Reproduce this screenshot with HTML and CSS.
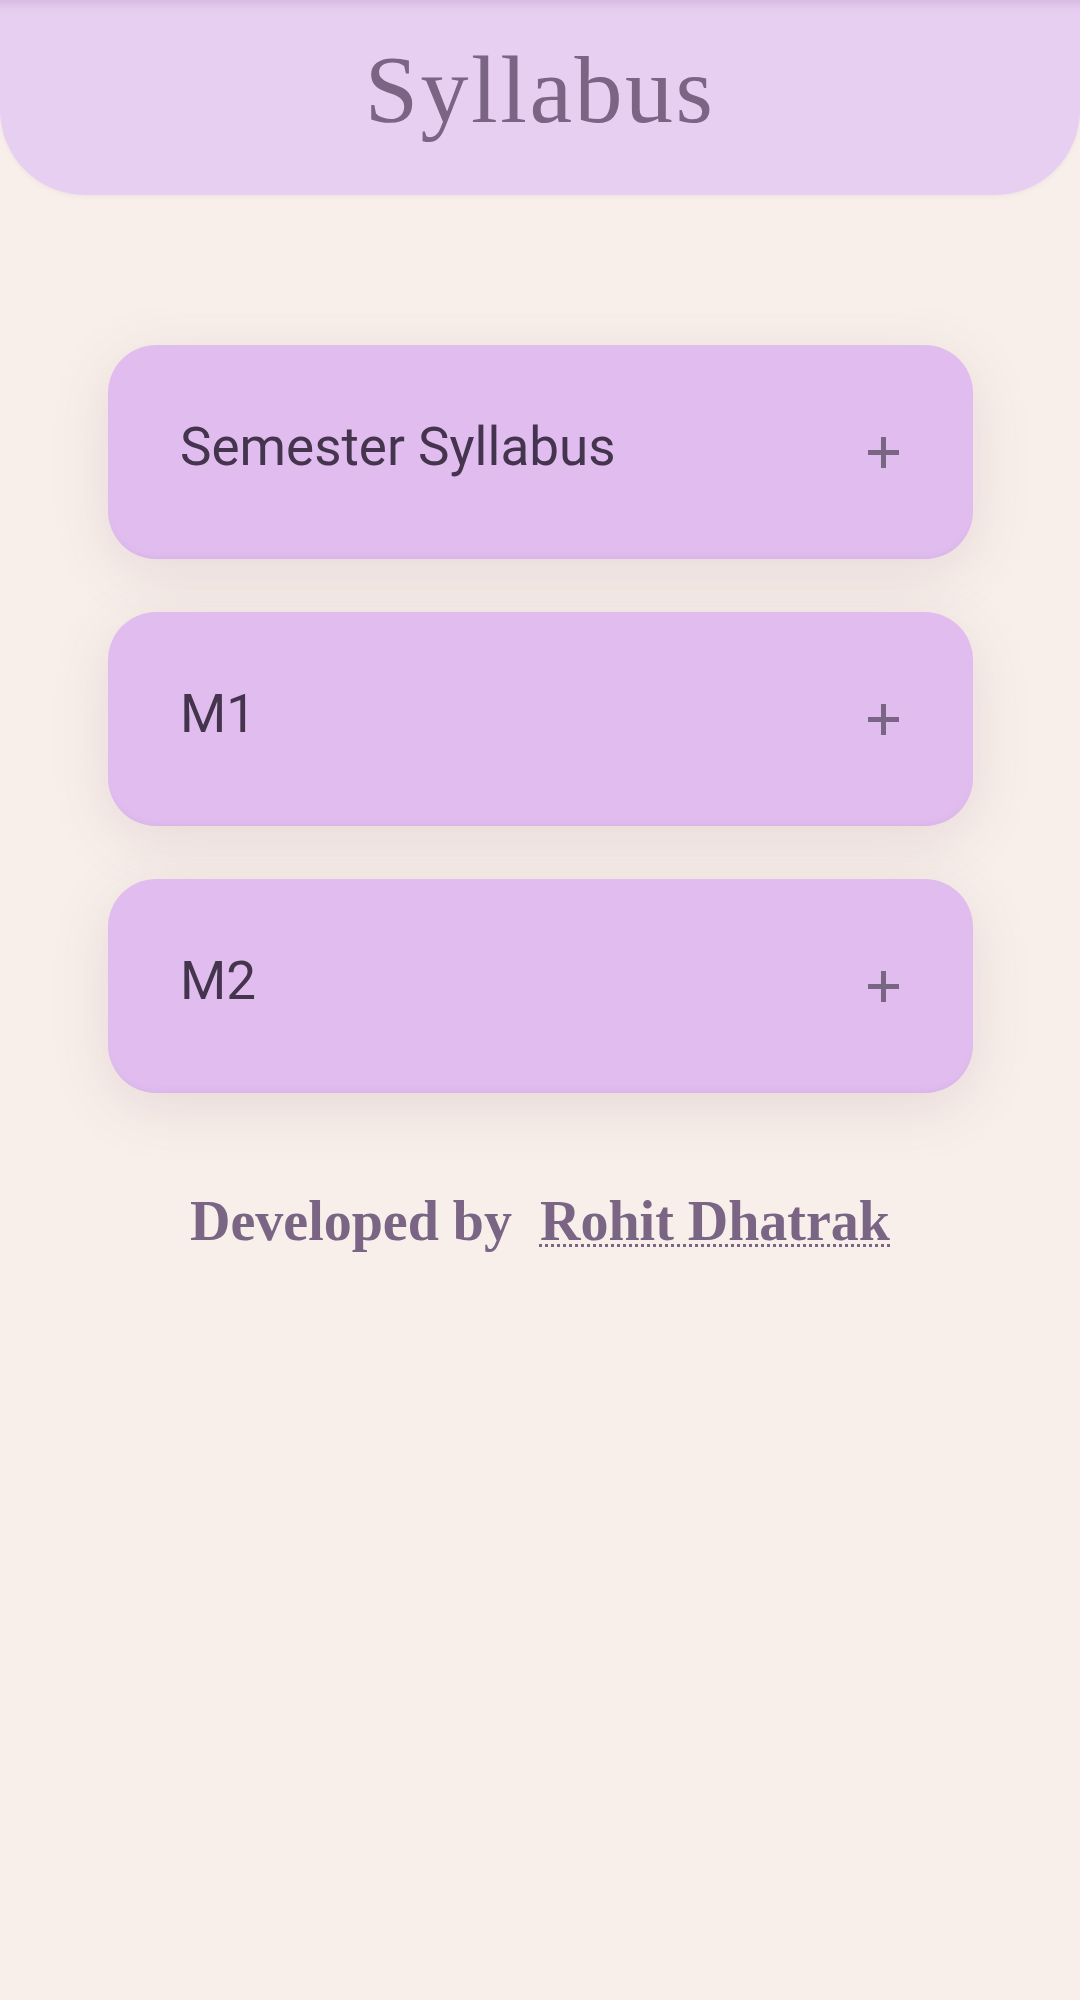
FILE: index.html
```html
<!DOCTYPE html>
<html lang="en">
<head>
<meta charset="utf-8">
<title>Syllabus</title>
<link rel="stylesheet" href="styles.css">
</head>
<body>
  <header class="topbar">
    <h1 class="title">Syllabus</h1>
  </header>
  <main class="list">
    <div class="card">
      <span class="card-label">Semester Syllabus</span>
      <svg class="plus" width="31" height="31" viewBox="0 0 31 31" aria-hidden="true">
        <rect x="13" y="0" width="5" height="31" fill="#7a6585"/>
        <rect x="0" y="13" width="31" height="5" fill="#7a6585"/>
      </svg>
    </div>
    <div class="card">
      <span class="card-label">M1</span>
      <svg class="plus" width="31" height="31" viewBox="0 0 31 31" aria-hidden="true">
        <rect x="13" y="0" width="5" height="31" fill="#7a6585"/>
        <rect x="0" y="13" width="31" height="5" fill="#7a6585"/>
      </svg>
    </div>
    <div class="card">
      <span class="card-label">M2</span>
      <svg class="plus" width="31" height="31" viewBox="0 0 31 31" aria-hidden="true">
        <rect x="13" y="0" width="5" height="31" fill="#7a6585"/>
        <rect x="0" y="13" width="31" height="5" fill="#7a6585"/>
      </svg>
    </div>
  </main>
  <footer class="credit">Developed by &nbsp;<a class="author" href="#">Rohit Dhatrak</a></footer>
</body>
</html>
```
FILE: styles.css
```css
html, body {
  margin: 0;
  padding: 0;
}
body {
  background: #f8efea;
  min-height: 2000px;
}
.topbar {
  box-sizing: border-box;
  height: 195px;
  padding-top: 42px;
  background: #e7cff1;
  border-radius: 0 0 85px 85px;
  box-shadow: inset 0 12px 10px -8px rgba(120, 80, 140, 0.18), 0 2px 4px rgba(150, 110, 140, 0.08);
  display: flex;
  justify-content: center;
  align-items: flex-start;
}
.title {
  margin: 0;
  font-family: "Liberation Serif", "Times New Roman", serif;
  font-weight: 400;
  font-size: 96px;
  line-height: 96px;
  letter-spacing: 2.5px;
  color: #7a6585;
}
.list {
  display: flex;
  flex-direction: column;
  gap: 53px;
  padding: 150px 107px 0 108px;
}
.card {
  box-sizing: border-box;
  height: 214px;
  padding: 0 74px 0 72px;
  background: #e1bdef;
  border-radius: 48px;
  box-shadow: 0 14px 60px rgba(110, 70, 90, 0.13), inset 0 -6px 6px -4px rgba(200, 160, 220, 0.35);
  display: flex;
  align-items: center;
  justify-content: space-between;
}
.card-label {
  font-family: Roboto, "Noto Sans", sans-serif;
  font-size: 53px;
  line-height: 53px;
  color: #45344d;
  margin-bottom: 10px;
}
.plus {
  display: block;
  flex: none;
}
.credit {
  margin-top: 96px;
  text-align: center;
  font-family: "Liberation Serif", "Times New Roman", serif;
  font-weight: 700;
  font-size: 56px;
  color: #7a6585;
}
.author {
  color: #7a6585;
  text-decoration: underline dotted;
  text-decoration-thickness: 3px;
  text-underline-offset: 4px;
}
```
